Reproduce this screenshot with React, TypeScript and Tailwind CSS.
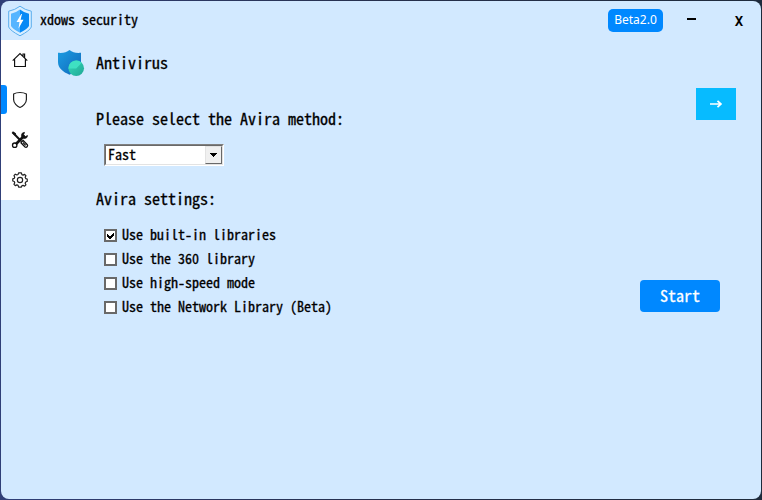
import React from "react";

const mono =
  "font-['Noto_Sans_CJK_SC','DejaVu_Sans_Mono',monospace] [font-feature-settings:'hwid'] font-normal whitespace-pre [-webkit-text-stroke:0.3px_currentColor]";

const options = [
  { label: "Use built-in libraries", checked: true },
  { label: "Use the 360 library", checked: false },
  { label: "Use high-speed mode", checked: false },
  { label: "Use the Network Library (Beta)", checked: false },
];

function Logo() {
  return (
    <svg width="26" height="32" viewBox="0 0 26 32" className="shrink-0">
      <path d="M13 1.2 Q18 5 24.3 6.2 V22 Q23 25.5 13 30.8 Q3 25.5 1.7 22 V6.2 Q8 5 13 1.2Z" fill="#d9eeff" stroke="#5aaeee" strokeWidth="1" />
      <path d="M13 4.500 Q8.500 8 4 8.800 V21 Q5 23.500 13 27.800Z" fill="#55b5ff" />
      <path d="M13 4.500 Q17.500 8 22 8.800 V21 Q21 23.500 13 27.800Z" fill="#0789f5" />
      <path d="M14.200 9 L9.500 17 H12.500 L11.500 23.500 L16.500 14.800 H13.600 L15 9Z" fill="#fff" />
    </svg>
  );
}

function HomeIcon() {
  return (
    <svg width="16" height="16" viewBox="0 0 16 16" fill="none" stroke="#111" strokeWidth="1.15">
      <path d="M.7 8.6 8 1.5l7.3 7.1M2.6 7v7.5h10.8V7M11 4.2V2h1.6v3.8" />
    </svg>
  );
}

function ShieldIcon() {
  return (
    <svg width="16" height="18" viewBox="0 0 16 18" fill="none" stroke="#222" strokeWidth="1.2">
      <path d="M8 1.500c2.200 0 4.700.500 6.400 1.500v5.500c0 3.600-3.400 6.900-6.400 8-3-1.100-6.400-4.400-6.400-8V3C3.300 2 5.800 1.500 8 1.500Z" />
    </svg>
  );
}

function ToolsIcon() {
  return (
    <svg width="18" height="18" viewBox="0 0 18 18" fill="none" stroke="#111">
      <path d="M2 1.800 10 10" strokeWidth="2" />
      <path d="M1.300 1.200 4.500 3.500" strokeWidth="2.200" />
      <path d="M5 13 13 5" strokeWidth="2.600" />
      <path d="M13.500 1.400A3 3 0 1 0 16.500 4.600L14.500 5.500 12.600 3.700Z" fill="#111" strokeWidth=".8" />
      <circle cx="3.700" cy="14.200" r="2.200" fill="#fff" strokeWidth="1.300" />
      <path d="m10.600 10.700 1.500-1.300 4.200 4.300c1 1.500-.8 3.300-2.300 2.300l-4-4.200Z" fill="#fff" strokeWidth="1.300" />
      <path d="m12 11.500 2.700 2.800" strokeWidth="1.200" />
    </svg>
  );
}

function GearIcon() {
  return (
    <svg width="16" height="16" viewBox="0 0 17 17" fill="none" stroke="#222" strokeWidth="1.250">
      <path d="M7 1h3l.5 1.800 1.300.5 1.600-.8 1.400 1.500-.8 1.700.6 1.300 1.600.5v2.500l-1.700.6-.5 1.300.8 1.700-1.400 1.400-1.700-.8-1.300.5L10 16H7l-.5-1.800-1.300-.5-1.700.8-1.400-1.400.8-1.700-.5-1.300L.8 9.500V7.300l1.600-.5.5-1.300-.8-1.700 1.400-1.500 1.700.8 1.300-.5Z" strokeLinejoin="round" />
      <circle cx="8.500" cy="8.500" r="2.800" />
    </svg>
  );
}

function AntivirusIcon() {
  return (
    <svg width="28" height="28" viewBox="0 0 28 28" className="shrink-0">
      <defs>
        <linearGradient id="shield" x1="0" y1="0" x2="1" y2="1">
          <stop offset="0" stopColor="#1b9de2" />
          <stop offset="1" stopColor="#1268bb" />
        </linearGradient>
        <linearGradient id="ball" x1="0" y1="0" x2="1" y2="1">
          <stop offset="0" stopColor="#36d9ba" />
          <stop offset="1" stopColor="#20a895" />
        </linearGradient>
      </defs>
      <path d="M12.500 1C15.500 3.500 19 4.200 24 3.800V13c0 6-5 10-11.500 12.700C6 23 1 19 1 13V3.800c5 .4 8.500-.3 11.500-2.800Z" fill="url(#shield)" />
      <circle cx="19.200" cy="19.200" r="7.800" fill="url(#ball)" />
      <path d="M11.500 19.600H19.200L24.700 13.700A7.800 7.800 0 0 0 11.500 19.600Z" fill="#3fe0c2" />
    </svg>
  );
}

function NavItem({ active = false, children }: { active?: boolean; children: React.ReactNode }) {
  return (
    <button className="relative flex h-10 w-full items-center justify-center pr-px">
      {active && <span className="absolute left-0 top-[5px] h-[29px] w-1.5 rounded-r-[3px] bg-[#0088ff]" />}
      {children}
    </button>
  );
}

export default function App() {
  return (
    <div className="h-[500px] w-[762px] bg-[linear-gradient(90deg,#303f78,#26304d_50%,#1e2b3c)] p-px">
      <div className="flex h-full flex-col overflow-hidden rounded-[8px] bg-[#d2e9ff] text-black">
        <header className="flex h-[39px] shrink-0 items-center pl-1.5">
          <Logo />
          <h1 className={`mb-[3px] ml-[7px] text-[14px] leading-5 ${mono}`}>xdows security</h1>
          <span className="mb-px ml-auto flex h-[23px] w-[55px] items-center justify-center rounded-[5px] bg-[#0088ff] font-['Noto_Sans',sans-serif] text-[12px] text-white">Beta2.0</span>
          <button aria-label="Minimize" className="mb-[3px] ml-[24px] h-[2px] w-[9px] bg-black" />
          <button className="ml-[38px] mr-[17px] w-[10px] text-center font-['DejaVu_Sans_Mono',monospace] text-[14px] font-bold leading-5">X</button>
        </header>
        <div className="flex min-h-0 flex-1">
          <nav className="h-[160px] w-[39px] bg-white">
            <NavItem><HomeIcon /></NavItem>
            <NavItem active><ShieldIcon /></NavItem>
            <NavItem><ToolsIcon /></NavItem>
            <NavItem><GearIcon /></NavItem>
          </nav>
          <main className="flex-1 pl-[17px] pt-[9px]">
            <div className="flex h-7 items-center">
              <AntivirusIcon />
              <h2 className={`mb-0.5 ml-[11px] text-[16px] leading-6 ${mono}`}>Antivirus</h2>
            </div>
            <div className="flex justify-between pl-[39px] pr-[25px]">
              <section className="pt-[29px]">
                <h3 className={`text-[16px] leading-6 ${mono}`}>Please select the Avira method:</h3>
                <button className="ml-2 mt-[14px] flex h-[22px] w-[120px] border border-b-white border-l-[#808080] border-r-white border-t-[#808080] bg-white">
                  <span className="flex h-full w-full items-center border border-b-[#e3e3e3] border-l-[#696969] border-r-[#e3e3e3] border-t-[#696969]">
                    <span className={`flex-1 pb-0.5 pl-0.5 text-left text-[14px] leading-4 ${mono}`}>Fast</span>
                    <span className="flex h-full w-[17px] items-center justify-center border border-b-[#696969] border-l-[#e3e3e3] border-r-[#696969] border-t-[#e3e3e3] bg-[#f0f0f0]">
                      <svg width="7" height="4" viewBox="0 0 7 4" shapeRendering="crispEdges"><path d="M0 0h7v1H6v1H5v1H4v1H3V3H2V2H1V1H0Z" /></svg>
                    </span>
                  </span>
                </button>
                <h3 className={`mt-[20px] text-[16px] leading-6 ${mono}`}>Avira settings:</h3>
                <div className="ml-2 mt-[13px]">
                  {options.map(({ label, checked }) => (
                    <label key={label} className="flex h-6 items-center">
                      <span className="flex h-[13px] w-[13px] items-center justify-center border-2 border-[#696969] bg-white">
                        {checked && <svg width="7" height="7" viewBox="0 0 7 7" shapeRendering="crispEdges"><path d="M0 2v3l2 2h1l4-4V0L3 4H2Z" /></svg>}
                      </span>
                      <span className={`mb-0.5 ml-[5px] text-[14px] leading-5 ${mono}`}>{label}</span>
                    </label>
                  ))}
                </div>
              </section>
              <aside className="flex flex-col items-end pt-[11px]">
                <button aria-label="Next" className="flex h-8 w-10 items-center justify-center bg-[#07bbff]">
                  <svg width="14" height="10" viewBox="0 0 14 10" fill="none" stroke="white" strokeWidth="1.700"><path d="M1 5h11M8.500 1.800 12 5 8.500 8.200" /></svg>
                </button>
                <button className={`mr-4 mt-[160px] h-8 w-20 rounded-[4px] bg-[#0088ff] pb-0.5 text-[16px] leading-[30px] text-white ${mono}`}>Start</button>
              </aside>
            </div>
          </main>
        </div>
      </div>
    </div>
  );
}
